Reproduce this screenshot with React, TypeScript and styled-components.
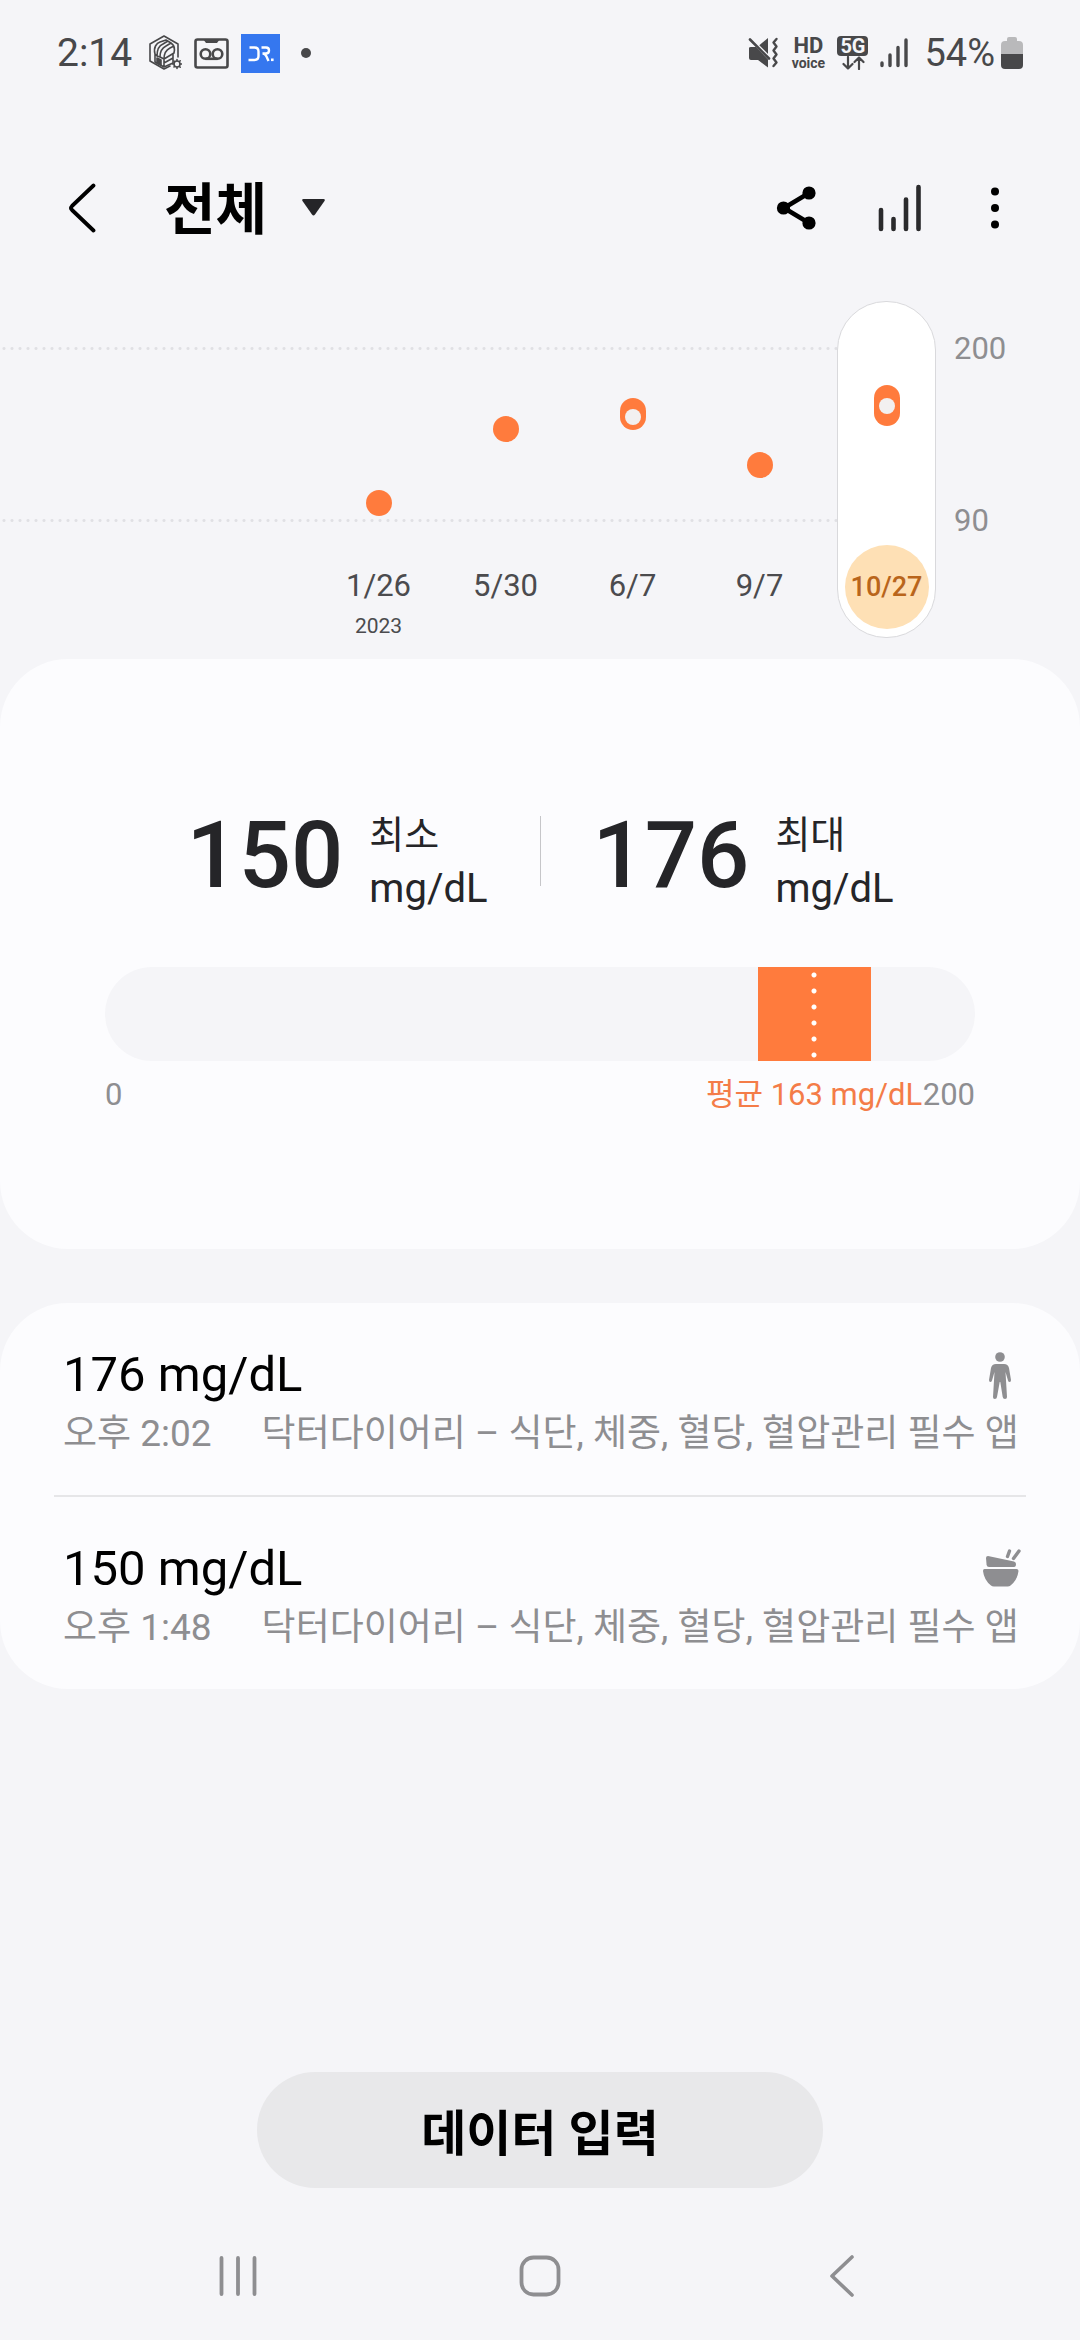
import React from "react";
import styled, { createGlobalStyle } from "styled-components";

const color = {
  page: "#f5f5f8",
  card: "#fcfcfe",
  ink: "#252528",
  status: "#48484a",
  muted: "#8e8e91",
  date: "#4b4b4e",
  accent: "#ff7b3d",
  line: "#e6e6e8",
};

const GlobalStyle = createGlobalStyle`
  *, *::before, *::after { box-sizing: border-box; }
  body {
    margin: 0;
    background: ${color.page};
    color: #000;
    font-family: Roboto, "Noto Sans CJK KR", sans-serif;
  }
  button, select { font: inherit; color: inherit; }
`;

const Screen = styled.div`
  display: flex;
  flex-direction: column;
  min-height: 100vh;
  background: ${color.page};
`;

/* ---------- status bar ---------- */

const StatusBar = styled.div`
  display: flex;
  align-items: center;
  justify-content: space-between;
  height: 106px;
  padding: 0 57px;
  color: ${color.status};
  font-size: 38px;
  line-height: 46px;
`;

const StatusGroup = styled.div`
  display: flex;
  align-items: center;
  gap: 12px;
`;

const Clock = styled.span`
  padding-right: 4px;
  font-size: 39px;
`;

const Charge = styled.div`
  display: flex;
  align-items: center;
  gap: 6px;
  margin-left: 4px;
`;

const VoiceBadge = styled.div`
  display: flex;
  flex-direction: column;
  align-items: center;
  width: 34px;
  font-weight: 700;
`;

const VoiceTop = styled.span`
  font-size: 22px;
  line-height: 20px;
`;

const VoiceBottom = styled.span`
  font-size: 14px;
  line-height: 14px;
`;

const NetworkBadge = styled.div`
  display: flex;
  flex-direction: column;
  align-items: center;
  width: 31px;
`;

const NetworkName = styled.span`
  width: 31px;
  border-radius: 4px;
  background: ${color.status};
  color: ${color.page};
  font-size: 20px;
  font-weight: 700;
  line-height: 20px;
  text-align: center;
`;

/* ---------- header ---------- */

const Header = styled.header`
  display: flex;
  align-items: center;
  height: 195px;
  padding: 8px 54px 0 42px;
`;

const IconButton = styled.button`
  display: flex;
  align-items: center;
  justify-content: center;
  width: 80px;
  height: 80px;
  padding: 0;
  border: 0;
  background: none;
`;

const Filter = styled.label`
  position: relative;
  display: flex;
  align-items: center;
  margin-left: 42px;
`;

const FilterSelect = styled.select`
  appearance: none;
  height: 80px;
  padding: 4px 59px 0 0;
  border: 0;
  background: none;
  color: #000;
  font-size: 56px;
  font-weight: 700;
  line-height: 76px;
`;

const FilterArrow = styled.svg`
  position: absolute;
  right: 2px;
  pointer-events: none;
`;

const Actions = styled.div`
  display: flex;
  gap: 24px;
  margin-left: auto;
`;

const MenuButton = styled(IconButton)`
  width: 62px;
`;

/* ---------- trend chart ---------- */

const Chart = styled.section`
  position: relative;
  display: flex;
  justify-content: flex-end;
  height: 337px;
`;

const GridLine = styled.div`
  position: absolute;
  left: 0;
  right: 194px;
  height: 3px;
  background: radial-gradient(circle, #e0e0e4 1px, transparent 2px) 0 0 / 8px 3px repeat-x;
`;

const Day = styled.button<{ $active: boolean }>`
  position: relative;
  width: ${(p) => (p.$active ? 99 : 97)}px;
  height: 337px;
  margin: 0 ${(p) => (p.$active ? 14 : 15)}px;
  padding: 0;
  border: ${(p) => (p.$active ? `1px solid #d9d9dc` : "0")};
  border-radius: 49px;
  background: ${(p) => (p.$active ? "#fff" : "none")};
`;

const DayContent = styled.span`
  display: flex;
  flex-direction: column;
  align-items: center;
  height: 100%;
  padding-top: 243px;
`;

const DayDate = styled.span<{ $active: boolean }>`
  flex: none;
  width: 84px;
  height: 84px;
  border-radius: 50%;
  background: ${(p) => (p.$active ? "#fee0b5" : "none")};
  color: ${(p) => (p.$active ? "#b9651b" : color.date)};
  font-size: ${(p) => (p.$active ? 27 : 31)}px;
  font-weight: ${(p) => (p.$active ? 500 : 400)};
  line-height: 84px;
  text-align: center;
`;

const DayYear = styled.span`
  margin-top: -16px;
  color: ${color.date};
  font-size: 21px;
  line-height: 28px;
`;

const Marker = styled.span`
  position: absolute;
  left: calc(50% - 13px);
  width: 26px;
  border-radius: 13px;
  background: ${color.accent};
`;

const Average = styled.span`
  position: absolute;
  left: 5px;
  width: 16px;
  height: 16px;
  border-radius: 50%;
  background: #f2f0f0;
`;

const Axis = styled.div`
  display: flex;
  flex-direction: column;
  gap: 132px;
  width: 130px;
  padding: 28px 0 0 4px;
  color: ${color.muted};
  font-size: 31px;
  line-height: 40px;
`;

/* ---------- summary card ---------- */

const Card = styled.section`
  border-radius: 68px;
  background: ${color.card};
`;

const Summary = styled(Card)`
  margin-top: 21px;
  padding: 149px 105px 134px;
`;

const Stats = styled.div`
  display: flex;
  align-items: flex-start;
  color: ${color.ink};
`;

const Stat = styled.div<{ $side: "start" | "end" }>`
  display: flex;
  flex: 1;
  justify-content: flex-${(p) => p.$side};
  gap: 26px;
  padding: 0 52px;
`;

const StatNumber = styled.span`
  font-size: 92px;
  font-weight: 500;
  line-height: 96px;
`;

const StatText = styled.span`
  display: flex;
  flex-direction: column;
  font-size: 40px;
  line-height: 54px;
`;

const StatName = styled.span`
  font-size: 38px;
`;

const StatDivider = styled.div`
  width: 1px;
  height: 70px;
  margin-top: 8px;
  background: #c6c6c9;
`;

const Track = styled.div`
  position: relative;
  height: 94px;
  margin-top: 51px;
  overflow: hidden;
  border-radius: 47px;
  background: ${color.page};
`;

const Range = styled.div`
  position: absolute;
  top: 0;
  bottom: 0;
  background: ${color.accent};
`;

const AverageDots = styled.div`
  width: 6px;
  height: 100%;
  margin: 0 auto;
  background: radial-gradient(circle, #fff 2px, transparent 3px) 0 0 / 6px 16px repeat-y;
`;

const Scale = styled.div`
  position: relative;
  display: flex;
  justify-content: space-between;
  margin-top: 14px;
  color: ${color.muted};
  font-size: 31px;
  line-height: 40px;
`;

const ScaleAverage = styled.span`
  position: absolute;
  top: 0;
  color: #f47c48;
  white-space: nowrap;
  transform: translateX(-50%);
`;

/* ---------- record list ---------- */

const Records = styled(Card).attrs({ as: "ul" })`
  margin: 54px 0 0;
  padding: 0 54px;
  list-style: none;
`;

const RecordItem = styled.li`
  padding: 42px 2px 32px 9px;
  & + & {
    border-top: 2px solid ${color.line};
  }
`;

const RecordTop = styled.div`
  display: flex;
  align-items: center;
  justify-content: space-between;
  height: 60px;
  font-size: 49px;
  line-height: 60px;
`;

const RecordInfo = styled.div`
  display: flex;
  gap: 50px;
  color: ${color.muted};
  font-size: 37px;
  line-height: 58px;
  white-space: nowrap;
`;

/* ---------- bottom ---------- */

const AddButton = styled.button`
  align-self: center;
  width: 566px;
  max-width: 90%;
  height: 116px;
  margin: auto 0 24px;
  padding: 0 0 2px;
  border: 0;
  border-radius: 58px;
  background: #e8e8ea;
  color: #000;
  font-size: 49px;
  font-weight: 700;
`;

const NavBar = styled.nav`
  display: flex;
  justify-content: space-around;
  height: 128px;
  padding: 0 87px;
`;

const NavButton = styled(IconButton)`
  width: 160px;
  height: 128px;
`;

/* ---------- drawings ---------- */

const StoreIcon = () => (
  <svg width="34" height="38" viewBox="0 0 34 38" fill="none" stroke={color.status} strokeWidth="1.6" strokeLinejoin="round" strokeLinecap="round">
    <path d="M30 23V10L16 2 2 10v17l14 8 6-3" />
    <path d="M7 20v8l9 5 9-4v-9M16 25v8M7 20c-2-7 2-11 5-12l6-2M7 20l2 2c0-6 1-10 6-12l5-3M9 22l3 1c0-6 2-9 6-11l5-3M12 23l4 2c0-6 2-9 6-11l4-2M16 25l10-6c1-4 0-8-3-10l-5-3M16 29l9-5" />
    <path d="M9 24l4 2v5l-4-2z" fill={color.status} />
    <circle cx="29" cy="30" r="3" />
    <path d="M29 25.500v1M29 33.500v1M24.500 30h1M32.500 30h1M26 27l.7.7M31.500 32.500l.7.7M26 33l.7-.7M31.500 27.500l.7-.7" />
  </svg>
);

const TapeIcon = () => (
  <svg width="35" height="31" viewBox="0 0 35 31" fill="none" stroke={color.status} strokeWidth="2.600">
    <rect x="1.500" y="1.500" width="32" height="28" rx="2" />
    <path d="M9 1h17l-3 4H12z" fill={color.status} stroke="none" />
    <circle cx="11.500" cy="16" r="4.800" />
    <circle cx="23.500" cy="16" r="4.800" />
    <path d="M11.500 20.800h12" />
  </svg>
);

const DoctorIcon = () => (
  <svg width="39" height="39" viewBox="0 0 39 39" fill="none" stroke="#fff" strokeWidth="2.400">
    <rect width="39" height="39" fill="#3577ef" stroke="none" />
    <path d="M8.500 13.500h5q4 0 4 4v4.500q0 4-4 4H7.500" />
    <path d="M20.500 13.500h4.500q3 0 3 3t-3 3h-3.500q2.500 0 4 3l2 4.500" />
    <rect x="30" y="24.500" width="2.600" height="2.600" fill="#fff" stroke="none" />
  </svg>
);

const MuteIcon = () => (
  <svg width="31" height="32" viewBox="0 0 31 32" fill={color.status}>
    <path d="M11 8.500l9-7.500v16.500z" />
    <path d="M2 2.500l19 19" stroke={color.page} strokeWidth="5" />
    <path d="M2 2.500l19 19" stroke={color.status} strokeWidth="2.600" strokeLinecap="round" />
    <path d="M1 11q0-1 2-1h5L20 22.500v8L10 23H3q-2 0-2-2z" />
    <path d="M28.500 2l-3 3.500 3 4-3 4 3 4-3 4 3 4-3 3.500" fill="none" stroke={color.status} strokeWidth="2.400" strokeLinecap="round" strokeLinejoin="round" />
  </svg>
);

const ArrowsIcon = () => (
  <svg width="25" height="14" viewBox="0 0 25 14" fill="none" stroke={color.status} strokeWidth="2.200" strokeLinecap="round" strokeLinejoin="round">
    <path d="M8 1v11.500M3.500 8l4.500 4.500L12.500 8M19 13V1.500M14.500 6L19 1.500 23.500 6" />
  </svg>
);

const SignalIcon = () => (
  <svg width="28" height="30" viewBox="0 0 28 30" stroke={color.status} strokeWidth="3.400" strokeLinecap="round">
    <path d="M2 25v2.500M10 17v10.500M18 9.500v18M26 2v25.500" />
  </svg>
);

const BatteryIcon = () => (
  <svg width="22" height="34" viewBox="0 0 22 34">
    <path d="M0 18V9q0-4 4-4h2V3q0-2 2-2h6q2 0 2 2v2h2q4 0 4 4v9z" fill="#b9b9bb" />
    <path d="M0 18h22v11q0 4-4 4H4q-4 0-4-4z" fill={color.status} />
  </svg>
);

const BackIcon = () => (
  <svg width="28" height="50" viewBox="0 0 28 50" fill="none" stroke="#000" strokeWidth="3.800" strokeLinecap="round" strokeLinejoin="round">
    <path d="M25.500 2.500L4 23q-2 2 0 4l21.500 20.500" />
  </svg>
);

const ShareIcon = () => (
  <svg width="40" height="44" viewBox="0 0 40 44">
    <path d="M33 7L8 22l25 15" fill="none" stroke="#000" strokeWidth="4.600" />
    <circle cx="33" cy="7" r="6.600" />
    <circle cx="7.500" cy="22" r="6.600" />
    <circle cx="33" cy="37" r="6.600" />
  </svg>
);

const BarsIcon = () => (
  <svg width="44" height="48" viewBox="0 0 44 48" stroke="#2a2a2c" strokeWidth="4.600" strokeLinecap="round">
    <path d="M3 26v19M15.500 35v10M28 15.500v29.500M40.500 3v42" />
  </svg>
);

const MoreIcon = () => (
  <svg width="10" height="42" viewBox="0 0 10 42">
    <circle cx="5" cy="4.500" r="4" />
    <circle cx="5" cy="21" r="4" />
    <circle cx="5" cy="37.500" r="4" />
  </svg>
);

const PersonIcon = () => (
  <svg width="48" height="48" viewBox="0 0 48 48" fill={color.muted}>
    <circle cx="24" cy="6" r="4.800" />
    <path d="M20 13h8q4 0 5 4l2 12q0 2-1.300 2T32 29.500L29.500 21l1.500 25q0 2-2 2t-2.300-2L24.300 31h-.6L21 46q-.3 2-2.200 2T17 46l1.500-25L16 29.500Q15.500 31 14.300 31T13 29l2-12q1-4 5-4z" />
  </svg>
);

const BowlIcon = () => (
  <svg width="48" height="48" viewBox="0 0 48 48" fill={color.muted}>
    <path d="M8.500 24h32q2 0 2 2-1 9-8 14.500-1 1-3 1H18q-2 0-3-1Q8 35 7 26q0-2 1.500-2z" />
    <path d="M10 13q0-2 2-2l26 5.500q2 .5 2 2.500 0 3-2 3H13q-2 0-2.400-2z" />
    <path d="M33.500 6l-2 5.500M43 6l-5.500 7.500" stroke={color.muted} strokeWidth="3.400" strokeLinecap="round" />
  </svg>
);

const RecentsIcon = () => (
  <svg width="40" height="42" viewBox="0 0 40 42" stroke={color.muted} strokeWidth="3.800" strokeLinecap="round">
    <path d="M3.500 3v36M20 3v36M36.500 3v36" />
  </svg>
);

const HomeIcon = () => (
  <svg width="42" height="42" viewBox="0 0 42 42" fill="none" stroke={color.muted} strokeWidth="3.800">
    <rect x="2.500" y="2.500" width="37" height="37" rx="12" />
  </svg>
);

const NavBackIcon = () => (
  <svg width="26" height="44" viewBox="0 0 26 44" fill="none" stroke={color.muted} strokeWidth="3.600" strokeLinecap="round" strokeLinejoin="round">
    <path d="M23 3L3 22l20 19" />
  </svg>
);

/* ---------- data ---------- */

type DayData = {
  date: string;
  year?: string;
  top: number;
  bottom: number;
  average?: number;
};

const days: DayData[] = [
  { date: "1/26", year: "2023", top: 189, bottom: 215 },
  { date: "5/30", top: 115, bottom: 141 },
  { date: "6/7", top: 97, bottom: 129, average: 116 },
  { date: "9/7", top: 151, bottom: 177 },
  { date: "10/27", top: 83, bottom: 124, average: 104 },
];

const selectedDate = "10/27";
const source = "닥터다이어리 – 식단, 체중, 혈당, 혈압관리 필수 앱";

const records = [
  { value: 176, time: "오후 2:02", icon: <PersonIcon /> },
  { value: 150, time: "오후 1:48", icon: <BowlIcon /> },
];

const scaleMax = 200;
const low = 150;
const high = 176;
const mean = (low + high) / 2;
const percent = (value: number) => `${(value / scaleMax) * 100}%`;

export default function App() {
  return (
    <Screen lang="ko">
      <GlobalStyle />

      <StatusBar>
        <StatusGroup>
          <Clock>2:14</Clock>
          <StoreIcon />
          <TapeIcon />
          <DoctorIcon />
          <svg width="34" height="10" viewBox="0 0 34 10">
            <circle cx="14" cy="5" r="5" fill={color.status} />
          </svg>
        </StatusGroup>
        <StatusGroup>
          <MuteIcon />
          <VoiceBadge>
            <VoiceTop>HD</VoiceTop>
            <VoiceBottom>voice</VoiceBottom>
          </VoiceBadge>
          <NetworkBadge>
            <NetworkName>5G</NetworkName>
            <ArrowsIcon />
          </NetworkBadge>
          <SignalIcon />
          <Charge>
            <span>54%</span>
            <BatteryIcon />
          </Charge>
        </StatusGroup>
      </StatusBar>

      <Header>
        <IconButton type="button" aria-label="뒤로">
          <BackIcon />
        </IconButton>
        <Filter>
          <FilterSelect aria-label="측정 구분" defaultValue="전체">
            <option>전체</option>
            <option>식전</option>
            <option>식후</option>
          </FilterSelect>
          <FilterArrow width="23" height="17" viewBox="0 0 23 17">
            <path d="M1.500 0h20q2 0 1 2L13 15.500q-1.500 2-3 0L.5 2q-1-2 1-2z" fill={color.ink} />
          </FilterArrow>
        </Filter>
        <Actions>
          <IconButton type="button" aria-label="공유">
            <ShareIcon />
          </IconButton>
          <IconButton type="button" aria-label="차트">
            <BarsIcon />
          </IconButton>
          <MenuButton type="button" aria-label="더보기">
            <MoreIcon />
          </MenuButton>
        </Actions>
      </Header>

      <Chart>
        <GridLine style={{ top: 46 }} />
        <GridLine style={{ top: 218 }} />
        {days.map((day) => {
          const active = day.date === selectedDate;
          return (
            <Day key={day.date} type="button" $active={active} aria-pressed={active}>
              <DayContent>
                <Marker style={{ top: day.top, height: day.bottom - day.top }}>
                  {day.average !== undefined && <Average style={{ top: day.average - day.top - 8 }} />}
                </Marker>
                <DayDate $active={active}>{day.date}</DayDate>
                {day.year && <DayYear>{day.year}</DayYear>}
              </DayContent>
            </Day>
          );
        })}
        <Axis>
          <span>200</span>
          <span>90</span>
        </Axis>
      </Chart>

      <Summary>
        <Stats>
          <Stat $side="end">
            <StatNumber>{low}</StatNumber>
            <StatText>
              <StatName>최소</StatName>
              <span>mg/dL</span>
            </StatText>
          </Stat>
          <StatDivider />
          <Stat $side="start">
            <StatNumber>{high}</StatNumber>
            <StatText>
              <StatName>최대</StatName>
              <span>mg/dL</span>
            </StatText>
          </Stat>
        </Stats>
        <Track>
          <Range style={{ left: percent(low), width: percent(high - low) }}>
            <AverageDots />
          </Range>
        </Track>
        <Scale>
          <span>0</span>
          <ScaleAverage style={{ left: percent(mean) }}>평균 {mean} mg/dL</ScaleAverage>
          <span>{scaleMax}</span>
        </Scale>
      </Summary>

      <Records>
        {records.map((record) => (
          <RecordItem key={record.time}>
            <RecordTop>
              <span>{record.value} mg/dL</span>
              {record.icon}
            </RecordTop>
            <RecordInfo>
              <span>{record.time}</span>
              <span>{source}</span>
            </RecordInfo>
          </RecordItem>
        ))}
      </Records>

      <AddButton type="button">데이터 입력</AddButton>

      <NavBar>
        <NavButton type="button" aria-label="최근 앱">
          <RecentsIcon />
        </NavButton>
        <NavButton type="button" aria-label="홈">
          <HomeIcon />
        </NavButton>
        <NavButton type="button" aria-label="이전">
          <NavBackIcon />
        </NavButton>
      </NavBar>
    </Screen>
  );
}
